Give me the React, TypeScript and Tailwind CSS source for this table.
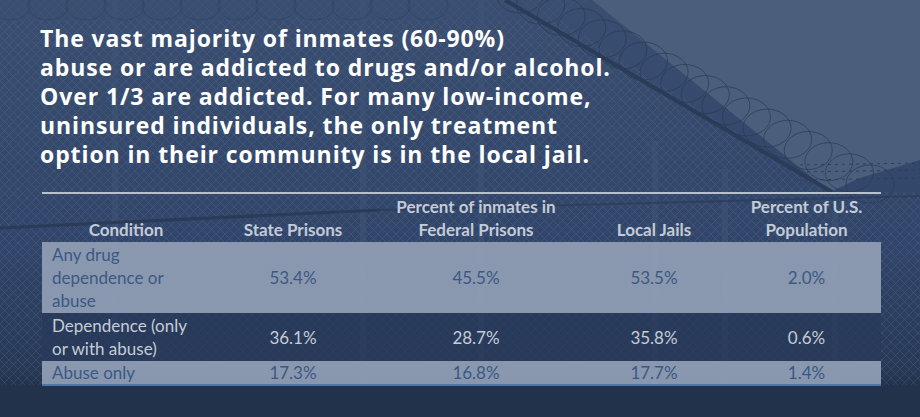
import type { ReactNode } from 'react';

const HEAD = "font-['Open_Sans',_sans-serif]";
const BODY = "font-['Lato',_'Liberation_Sans',_sans-serif]";

const ROWS = [
  { label: 'Any drug dependence or abuse', values: ['53.4%', '45.5%', '53.5%', '2.0%'], light: true, h: 'h-[71px]' },
  { label: 'Dependence (only or with abuse)', values: ['36.1%', '28.7%', '35.8%', '0.6%'], light: false, h: 'h-[48px]' },
  { label: 'Abuse only', values: ['17.3%', '16.8%', '17.7%', '1.4%'], light: true, h: 'h-[23px]' },
];

const COLS = 'grid grid-cols-[168px_166px_200px_156px_149px]';

/** Tinted photo stand-in: fence, posts and razor wire. */
function Backdrop() {
  const coils: ReactNode[] = [];
  for (let i = 0; i < 18; i++) {
    const t = i / 17;
    const cx = 520 + t * 350;
    const cy = -6 + t * 190;
    coils.push(
      <ellipse key={`c${i}`} cx={cx} cy={cy} rx={24} ry={19} fill="none" stroke="#2a3b57" strokeWidth={1} opacity={0.75} />,
    );
  }
  for (let i = 0; i < 12; i++) {
    coils.push(
      <ellipse key={`l${i}`} cx={10 + i * 38} cy={6} rx={20} ry={14} fill="none" stroke="#2d405d" strokeWidth={1} opacity={0.5} />,
    );
  }
  return (
    <svg className="absolute inset-0" width={920} height={417} viewBox="0 0 920 417">
      <defs>
        <linearGradient id="fade" x1="0" y1="0" x2="0" y2="1">
          <stop offset="0" stopColor="#394e70" />
          <stop offset="0.6" stopColor="#31456a" />
          <stop offset="0.88" stopColor="#283957" />
          <stop offset="0.93" stopColor="#22324b" />
          <stop offset="1" stopColor="#22324b" />
        </linearGradient>
        <pattern id="link" width="9" height="9" patternUnits="userSpaceOnUse">
          <path d="M0 0 L9 9 M9 0 L0 9" stroke="#6a7d99" strokeWidth="0.6" opacity="0.35" />
        </pattern>
      </defs>
      <rect width={920} height={417} fill="url(#fade)" />
      <polygon points="592,0 920,0 920,160 860,178 830,192" fill="#4b5f7c" />
      <polygon points="0,20 560,20 830,192 920,192 920,385 0,385" fill="url(#link)" />
      <polygon points="0,0 592,0 560,20 0,20" fill="url(#link)" opacity="0.6" />
      {[112, 360, 478, 652, 722, 832].map((x) => {
        const top = x > 600 ? 120 + (x - 600) * 0.4 : 0;
        return <rect key={x} x={x} y={top} width={6} height={385 - top} fill="#3f5476" opacity={0.5} />;
      })}
      <line x1={505} y1={0} x2={832} y2={192} stroke="#2b3c59" strokeWidth={4} />
      <line x1={0} y1={228} x2={380} y2={210} stroke="#2a3b58" strokeWidth={3} />
      <line x1={380} y1={210} x2={920} y2={196} stroke="#2a3b58" strokeWidth={2} opacity={0.7} />
      {[165, 172, 180].map((y) => (
        <line key={y} x1={800} y1={y} x2={920} y2={y - 2} stroke="#2c3e5b" strokeWidth={1} strokeDasharray="3 4" />
      ))}
      {coils}
    </svg>
  );
}

export default function App() {
  return (
    <div className="relative h-[417px] w-[920px] overflow-hidden bg-[#2d405e]">
      <Backdrop />

      <div className={`relative pl-10 pt-[24px] text-[23px] font-bold leading-[29px] tracking-[0.9px] text-white ${HEAD}`}>
        <p>The vast majority of inmates (60-90%)</p>
        <p>abuse or are addicted to drugs and/or alcohol.</p>
        <p>Over 1/3 are addicted. For many low-income,</p>
        <p>uninsured individuals, the only treatment</p>
        <p>option in their community is in the local jail.</p>
      </div>

      <div className={`relative ml-[42px] mt-[23px] w-[839px] border-t-2 border-[#b7c1ce] text-[17px] leading-[23px] ${BODY}`}>
        {/* Header */}
        <div className={`${COLS} h-[48px] items-end pb-[1px] text-center font-bold text-[#c3cbd6]`}>
          <div>Condition</div>
          <div>State Prisons</div>
          <div>
            Percent of inmates in
            <br />
            Federal Prisons
          </div>
          <div>Local Jails</div>
          <div>
            Percent of U.S.
            <br />
            Population
          </div>
        </div>

        {/* Body */}
        {ROWS.map((r) => (
          <div
            key={r.label}
            className={`${COLS} ${r.h} items-center ${
              r.light ? 'bg-[#8e9db3]/95 text-[#3b5884]' : 'bg-[#28395a]/70 text-[#c5ccd6]'
            }`}
          >
            <div className="px-[10px]">{r.label}</div>
            {r.values.map((v, i) => (
              <div key={i} className="text-center">
                {v}
              </div>
            ))}
          </div>
        ))}
        <div className="h-[2px] bg-[#4f73a6]" />
      </div>
    </div>
  );
}
